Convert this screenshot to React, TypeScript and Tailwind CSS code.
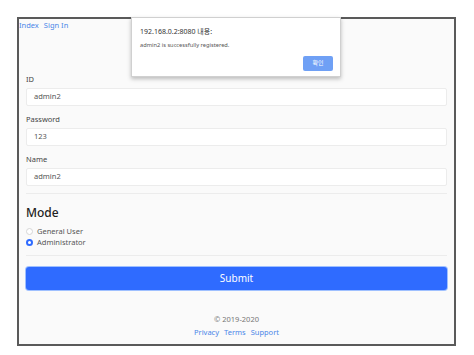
import React from "react";

function Field({ label, value }: { label: string; value: string }) {
  return (
    <div className="mb-[7px]">
      <div className="h-[12px] text-[7.5px] leading-[12px] text-[#444]">{label}</div>
      <div className="mt-[3px] flex h-[18px] items-center rounded-[2px] border border-[#ececec] bg-white px-[7px] text-[7.5px] text-[#555]">
        {value}
      </div>
    </div>
  );
}

function Radio({ label, checked }: { label: string; checked?: boolean }) {
  return (
    <div className="flex h-[11px] items-center gap-[4px] text-[7.5px] text-[#555]">
      <span
        className={
          checked
            ? "h-[7px] w-[7px] rounded-full border-[2px] border-[#2f6bff] bg-white"
            : "h-[7px] w-[7px] rounded-full border border-[#d6d6d6] bg-white"
        }
      />
      {label}
    </div>
  );
}

export default function App() {
  return (
    <div
      className="h-[355px] w-[474px] bg-white pl-[17px] pt-[17px]"
      style={{ fontFamily: '"Noto Sans", "Noto Sans CJK KR", sans-serif' }}
    >
      <div className="relative h-[329px] w-[439px] border-2 border-[#5a5a5a] bg-[#fafafa]">
        {/* nav */}
        <div className="flex h-[13px] items-center gap-[5px] text-[7.5px] text-[#4a86e8]">
          <span>Index</span>
          <span>Sign In</span>
        </div>

        <div className="px-[7px] pt-[41px]">
          <Field label="ID" value="admin2" />
          <Field label="Password" value="123" />
          <Field label="Name" value="admin2" />

          <div className="border-t border-[#ececec]" />

          <div className="mt-[10px] text-[12px] leading-[18px] font-medium text-[#222]">Mode</div>
          <div className="mt-[4px]">
            <Radio label="General User" />
            <Radio label="Administrator" checked />
          </div>

          <div className="mt-[7px] border-t border-[#ececec]" />

          <button
            type="button"
            className="mt-[11px] flex h-[23px] w-full items-center justify-center rounded-[3px] bg-[#2f6bff] text-[10px] text-white shadow-[0_0_0_1px_#9fc0ff]"
          >
            Submit
          </button>

          <div className="mt-[23px] text-center text-[7.5px] leading-[12px] text-[#777]">© 2019-2020</div>
          <div className="mt-[1px] flex justify-center gap-[5px] text-[7.5px] leading-[12px] text-[#4a86e8]">
            <span>Privacy</span>
            <span>Terms</span>
            <span>Support</span>
          </div>
        </div>

        {/* alert dialog */}
        <div className="absolute left-[112px] top-[-2px] h-[60px] w-[210px] border border-[#d0d0d0] bg-white shadow-[0_2px_4px_rgba(0,0,0,0.25)]">
          <div className="pl-[8px] pt-[8px] text-[7px] leading-[11px] text-[#333]">192.168.0.2:8080 내용:</div>
          <div className="pl-[8px] pt-[3px] text-[5.7px] leading-[10px] text-[#555]">
            admin2 is successfully registered.
          </div>
          <div className="flex justify-end pr-[7px] pt-[6px]">
            <div className="flex h-[15px] w-[30px] items-center justify-center rounded-[2px] bg-[#6fa0f5] text-[6px] text-white">
              확인
            </div>
          </div>
        </div>
      </div>
    </div>
  );
}
